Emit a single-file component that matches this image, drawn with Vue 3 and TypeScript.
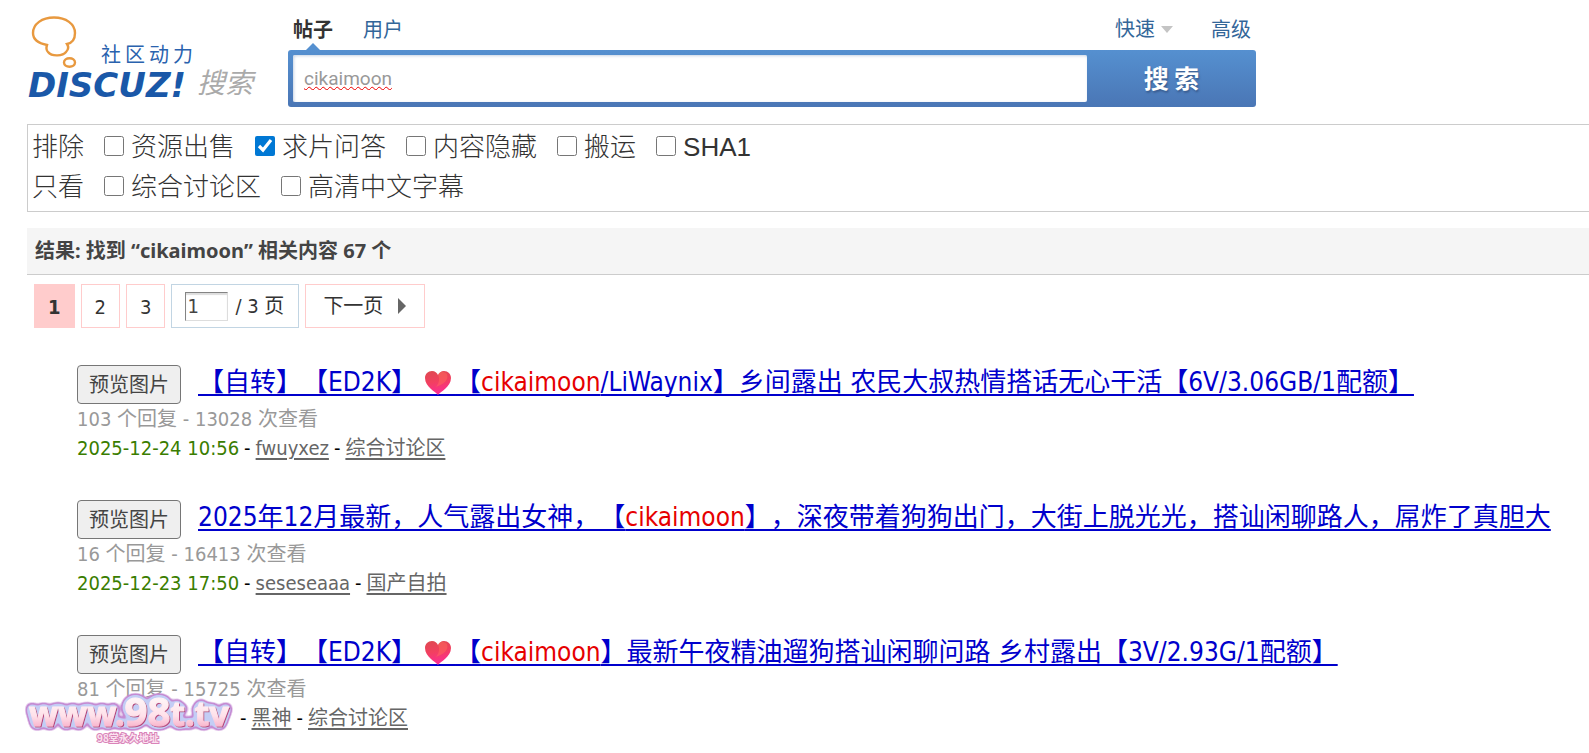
<script setup lang="ts">
import { ref } from 'vue'

interface Option { label: string; checked: boolean }
interface FilterRow { name: string; options: Option[] }
interface Part { kind: 'text' | 'hit' | 'heart'; text?: string }
interface Result {
  id: number
  title: Part[]
  stats: string
  date: string
  author: string
  forum: string
}

const query = ref('cikaimoon')
const page = ref('1')

const filters = ref<FilterRow[]>([
  {
    name: '排除',
    options: [
      { label: '资源出售', checked: false },
      { label: '求片问答', checked: true },
      { label: '内容隐藏', checked: false },
      { label: '搬运', checked: false },
      { label: 'SHA1', checked: false },
    ],
  },
  {
    name: '只看',
    options: [
      { label: '综合讨论区', checked: false },
      { label: '高清中文字幕', checked: false },
    ],
  },
])

const results: Result[] = [
  {
    id: 1,
    title: [
      { kind: 'text', text: '【自转】【ED2K】' },
      { kind: 'heart' },
      { kind: 'text', text: '【' },
      { kind: 'hit', text: 'cikaimoon' },
      { kind: 'text', text: '/LiWaynix】乡间露出 农民大叔热情搭话无心干活【6V/3.06GB/1配额】' },
    ],
    stats: '103 个回复 - 13028 次查看',
    date: '2025-12-24 10:56',
    author: 'fwuyxez',
    forum: '综合讨论区',
  },
  {
    id: 2,
    title: [
      { kind: 'text', text: '2025年12月最新，人气露出女神，【' },
      { kind: 'hit', text: 'cikaimoon' },
      { kind: 'text', text: '】，深夜带着狗狗出门，大街上脱光光，搭讪闲聊路人，屌炸了真胆大' },
    ],
    stats: '16 个回复 - 16413 次查看',
    date: '2025-12-23 17:50',
    author: 'seseseaaa',
    forum: '国产自拍',
  },
  {
    id: 3,
    title: [
      { kind: 'text', text: '【自转】【ED2K】' },
      { kind: 'heart' },
      { kind: 'text', text: '【' },
      { kind: 'hit', text: 'cikaimoon' },
      { kind: 'text', text: '】最新午夜精油遛狗搭讪闲聊问路 乡村露出【3V/2.93G/1配额】' },
    ],
    stats: '81 个回复 - 15725 次查看',
    date: '',
    author: '黑神',
    forum: '综合讨论区',
  },
]
</script>

<template>
  <div class="page">
    <header class="header">
      <a href="#" class="logo" aria-label="Discuz! 社区动力 搜索">
        <svg width="232" height="90" viewBox="0 0 232 90">
          <g fill="none" stroke="#e8993f" stroke-width="2.4">
            <path d="M20 29C10 27 6 22 6 17C6 8 15 1.500 27 1.500C39 1.500 48 8 48 17C48 23 45 27 40 28C42 31 41 34 39 36C36 40 25 41 21 36C19 34 19 32 20 29Z" />
            <ellipse cx="42.500" cy="46.500" rx="5.500" ry="4.200" />
          </g>
          <text x="74" y="46" class="logo-sub">社区动力</text>
          <text x="1" y="81" class="logo-name">DISCUZ!</text>
          <text x="170" y="77" class="logo-tail">搜索</text>
        </svg>
      </a>
      <form class="search" @submit.prevent>
        <nav class="tabs">
          <a href="#" class="tab active">帖子</a>
          <a href="#" class="tab">用户</a>
          <span class="spacer"></span>
          <a href="#" class="tab quick">快速<i class="caret"></i></a>
          <a href="#" class="tab">高级</a>
        </nav>
        <div class="bar">
          <input v-model="query" class="query" type="text" aria-label="搜索内容" spellcheck="false" />
          <button type="submit" class="go">搜 索</button>
        </div>
      </form>
    </header>

    <section class="filters">
      <div v-for="row in filters" :key="row.name" class="filter-row">
        <span>{{ row.name }}</span>
        <label v-for="o in row.options" :key="o.label" class="option">
          <input v-model="o.checked" type="checkbox" />
          <span>{{ o.label }}</span>
        </label>
      </div>
    </section>

    <h2 class="summary">结果: 找到 “<em>cikaimoon</em>” 相关内容 67 个</h2>

    <nav class="pager">
      <strong class="pg current">1</strong>
      <a href="#" class="pg">2</a>
      <a href="#" class="pg">3</a>
      <label class="pg jump">
        <input v-model="page" type="text" aria-label="页码" />
        <span>/ 3 页</span>
      </label>
      <a href="#" class="pg next">下一页
        <svg width="10" height="16" viewBox="0 0 10 16"><path d="M1 0L9 8L1 16Z" fill="#666" /></svg>
      </a>
    </nav>

    <ul class="results">
      <li v-for="r in results" :key="r.id" class="result">
        <div class="headline">
          <button type="button" class="preview">预览图片</button>
          <a href="#" class="title"><template v-for="(p, i) in r.title" :key="i"><svg v-if="p.kind === 'heart'" class="heart" width="38" height="28" viewBox="0 0 38 28"><defs><linearGradient :id="'h' + r.id" x1="0" y1="0" x2="0.2" y2="1"><stop offset="0" stop-color="#dd4a50" /><stop offset="0.5" stop-color="#f2405f" /><stop offset="1" stop-color="#fb2d92" /></linearGradient></defs><path d="M0 26H38V28H0Z" fill="#0000cc" /><path d="M21 27C19 24 8 19 8 10C8 6 11 3 15 3C18 3 20 5 21 7C22 5 24 3 27 3C31 3 34 6 34 10C34 19 23 24 21 27Z" :fill="`url(#h${r.id})`" /><path d="M21 7C23 11 22 15 19 19C27 16 32 12 30 6C27 3 23 3 21 7Z" fill="#ff6a5c" opacity="0.5" /></svg><span v-else :class="p.kind">{{ p.text }}</span></template></a>
        </div>
        <p class="stats">{{ r.stats }}</p>
        <p class="meta">
          <span class="date">{{ r.date }}</span>
          <span>-</span>
          <a href="#">{{ r.author }}</a>
          <span>-</span>
          <a href="#">{{ r.forum }}</a>
        </p>
      </li>
    </ul>

    <div class="watermark">
      <svg width="220" height="62" viewBox="0 0 220 62">
        <defs>
          <linearGradient id="wm" x1="0" y1="0" x2="0" y2="1">
            <stop offset="0.3" stop-color="#fff4f6" />
            <stop offset="0.6" stop-color="#ffe1ea" />
            <stop offset="0.85" stop-color="#f7a8c4" />
          </linearGradient>
          <filter id="sticker" filterUnits="userSpaceOnUse" x="0" y="0" width="220" height="62">
            <feGaussianBlur in="SourceAlpha" stdDeviation="3" result="soft" />
            <feComponentTransfer in="soft" result="outer">
              <feFuncA type="linear" slope="14" intercept="-0.6" />
            </feComponentTransfer>
            <feFlood flood-color="#c58bd3" />
            <feComposite in2="outer" operator="in" result="rim" />
            <feComponentTransfer in="soft" result="inner">
              <feFuncA type="linear" slope="14" intercept="-2.2" />
            </feComponentTransfer>
            <feFlood flood-color="#c3cdf5" />
            <feComposite in2="inner" operator="in" result="body" />
            <feOffset in="SourceAlpha" dx="1" dy="1" result="moved" />
            <feFlood flood-color="#b8407c" />
            <feComposite in2="moved" operator="in" result="edge" />
            <feMerge>
              <feMergeNode in="rim" />
              <feMergeNode in="body" />
              <feMergeNode in="edge" />
              <feMergeNode in="SourceGraphic" />
            </feMerge>
          </filter>
        </defs>
        <text x="8" y="40" class="wm-name" filter="url(#sticker)">www.<tspan class="wm-big">98</tspan>t.tv</text>
        <text x="76" y="56" class="wm-note">98堂永久地址</text>
      </svg>
    </div>
  </div>
</template>

<style>
body {
  margin: 0;
  background: #fff;
}
html {
  overflow: hidden;
}
</style>

<style scoped>
.page {
  position: relative;
  padding-left: 27px;
  color: #333;
  font: 20px/28px "DejaVu Sans Condensed", "Noto Sans", "Noto Sans CJK SC", sans-serif;
}
.header {
  display: flex;
  align-items: flex-start;
  gap: 29px;
  padding: 16px 16px 0 0;
}
.logo {
  flex: none;
  width: 232px;
  height: 90px;
}
.logo svg {
  display: block;
}
.logo-sub {
  font: 20px "Noto Sans CJK SC", sans-serif;
  letter-spacing: 4px;
  fill: #2a62ae;
}
.logo-name {
  font: italic 700 34px "DejaVu Sans", sans-serif;
  fill: #1a58a8;
}
.logo-tail {
  font: italic 28px "Noto Sans CJK SC", sans-serif;
  fill: #aaa;
}
.search {
  flex: 1;
  max-width: 968px;
}
.tabs {
  display: flex;
  gap: 30px;
  height: 34px;
  padding: 0 5px;
}
.tab {
  position: relative;
  color: #369;
  text-decoration: none;
  line-height: 28px;
}
.tab.active {
  color: #333;
  font-weight: 700;
}
.tab.active::after {
  content: "";
  position: absolute;
  left: 13px;
  bottom: 0;
  border: 7px solid transparent;
  border-top: 0;
  border-bottom-color: #5590d0;
}
.spacer {
  flex: 1;
}
.quick {
  display: flex;
  align-items: center;
  gap: 6px;
  height: 26px;
  margin-right: 8px;
}
.caret {
  border: 6px solid transparent;
  border-top: 7px solid #c4c4c4;
  border-bottom: 0;
}
.bar {
  display: flex;
  height: 57px;
  box-sizing: border-box;
  padding: 5px 0 5px 5px;
  border-radius: 3px;
  background: linear-gradient(#5590d0, #4a76b5);
}
.query {
  flex: 1;
  min-width: 0;
  box-sizing: border-box;
  border: 0;
  border-radius: 2px;
  padding: 0 11px;
  background: #fff;
  box-shadow: inset 1px 1px 3px #c8d4e4;
  color: #999;
  font: 19px Roboto, "Noto Sans CJK SC", sans-serif;
  text-decoration: underline wavy #e00 1px;
  outline: 0;
}
.go {
  width: 169px;
  border: 0;
  padding: 0 0 4px;
  background: none;
  color: #fff;
  font: bold 25px "Noto Sans CJK SC", sans-serif;
  text-shadow: 1px 2px 2px #3a5d90;
}
.filters {
  margin-top: 17px;
  padding: 2px 4px 4px;
  border: 1px solid #ccc;
  border-right: 0;
  font: 300 26px/40px "Liberation Sans", "Noto Sans CJK SC", sans-serif;
}
.filter-row {
  display: flex;
  gap: 20px;
}
.option {
  display: flex;
  align-items: center;
  gap: 7px;
}
.option input {
  width: 20px;
  height: 20px;
  margin: 0 0 2px;
  accent-color: #0078d4;
}
.summary {
  margin: 16px 0 0;
  padding: 0 8px;
  border-bottom: 1px solid #ccc;
  background: #f5f5f5;
  color: #444;
  font: bold 20px/46px "Noto Sans", "Noto Sans CJK SC", sans-serif;
}
.summary em {
  font-style: normal;
}
.pager {
  display: flex;
  gap: 6px;
  padding: 9px 7px 0;
}
.pg {
  box-sizing: border-box;
  height: 44px;
  padding: 0 13px;
  border: 1px solid #fcc;
  color: #333;
  line-height: 44px;
  text-decoration: none;
}
.current {
  background: #fcc;
}
.jump {
  display: flex;
  align-items: center;
  gap: 7px;
  padding: 0 14px 0 13px;
  border-color: #c2d5e3;
}
.jump input {
  box-sizing: border-box;
  width: 43px;
  height: 29px;
  padding: 0 1px;
  border: 1px solid;
  border-color: #848484 #ddd #ddd #848484;
  box-shadow: inset 0 2px 1px #ddd;
  color: #444;
  font: inherit;
}
.next {
  display: flex;
  align-items: center;
  gap: 14px;
  padding: 0 17px;
}
.results {
  margin: 0;
  padding: 37px 0 0 50px;
  list-style: none;
}
.result {
  height: 135px;
}
.headline {
  display: flex;
  align-items: flex-start;
  gap: 17px;
  margin-bottom: 1px;
}
.preview {
  flex: none;
  box-sizing: border-box;
  width: 104px;
  height: 39px;
  padding: 0;
  border: 1px solid #767676;
  border-radius: 4px;
  background: #efefef;
  color: #444;
  font: inherit;
}
.title {
  color: #0000cc;
  font-size: 26px;
  line-height: 34px;
  white-space: nowrap;
  text-spacing-trim: space-all;
  text-decoration: underline 2px;
  text-underline-offset: 3px;
  text-decoration-skip-ink: none;
}
.hit {
  color: #e60000;
}
.heart {
  vertical-align: -5px;
}
.stats {
  margin: 0;
  color: #999;
  line-height: 29px;
}
.meta {
  display: flex;
  gap: 5px;
  margin: 0;
  color: #000;
  line-height: 29px;
}
.date {
  min-width: 158px;
  color: #3a7d00;
}
.meta a {
  color: #666;
  text-underline-offset: 3px;
}
.watermark {
  position: absolute;
  left: 21px;
  top: 686px;
}
.watermark svg {
  display: block;
}
.wm-name {
  font: 700 34px "Noto Sans", sans-serif;
  fill: url(#wm);
  stroke: url(#wm);
  stroke-width: 1;
  stroke-linejoin: round;
}
.wm-big {
  font-size: 40px;
}
.wm-note {
  font: 700 10px "Noto Sans CJK SC", sans-serif;
  fill: #fbe3f0;
  stroke: #d983b9;
  stroke-width: 2;
  paint-order: stroke;
}
</style>
